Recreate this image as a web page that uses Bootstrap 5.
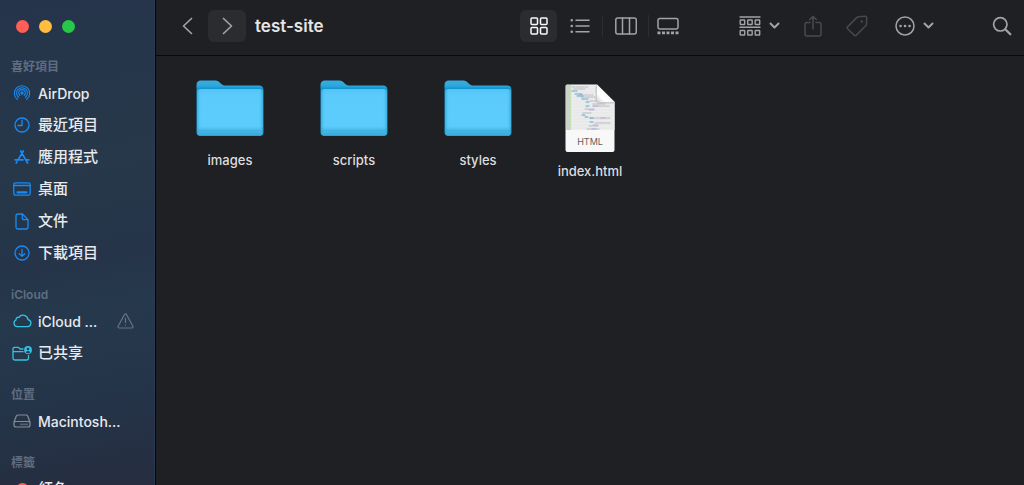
<!DOCTYPE html>
<html lang="zh-Hant">
<head>
<meta charset="utf-8">
<meta name="viewport" content="width=device-width, initial-scale=1">
<title>test-site</title>
<link href="https://cdn.jsdelivr.net/npm/bootstrap@5.3.0/dist/css/bootstrap.min.css" rel="stylesheet">
<style>
  body { background: #1f2023; color: #e3e3e5; font-family: Inter, "Noto Sans CJK TC", sans-serif; }
  svg { fill: none; stroke: currentColor; stroke-linecap: round; stroke-linejoin: round; display: block; flex-shrink: 0; }
  button { background: none; border: 0; padding: 0; color: inherit; }

  .sidebar { width: 156px; border-right: 1px solid #050607; box-shadow: inset -1px 0 #2b3b51; padding-top: 19px;
    background: linear-gradient(170deg, #25344a 0%, #27384a 35%, #253449 54%, #26394c 64%, #243449 80%, #262d40 100%); }
  .lights { height: 14px; gap: 10px; padding-left: 16px; margin-bottom: 24px; }
  .light { width: 13px; height: 13px; border-radius: 50%; }
  .red { background: #ff5f57; } .yellow { background: #ffbc3e; } .green { background: #27c84a; }
  .group { margin-bottom: 16px; }
  .group h2 { font-size: 12px; line-height: 20px; font-weight: 600; color: #5f6d80; margin: 0; padding-left: 11px; }
  .place { height: 32px; padding-left: 11px; color: #e8eaee; font-size: 15px; font-weight: 500; text-decoration: none; white-space: nowrap; }
  .place.latin { font-size: 14px; }
  .place .icon { width: 22px; margin-right: 5px; display: flex; justify-content: center; color: #188bf5; }
  .place .cyan { color: #35c3e3; }
  .place .gray { color: #858c96; }
  .place .warn { color: #667283; margin-left: auto; margin-right: 21px; }

  .toolbar { height: 56px; border-bottom: 1px solid #08090a; padding: 0 12px 4px 12px; color: #a2a3a6; }
  .tool { height: 32px; display: flex; align-items: center; justify-content: center; }
  .nav-tools { gap: 2px; }
  .nav-tool { width: 38px; border-radius: 6px; }
  .raised { background: #2b2c2f; }
  .toolbar h1 { font-size: 17px; font-weight: 600; line-height: 20px; margin: 0 0 0 9px; color: #e5e5e6; }
  .views { margin-right: 53px; }
  .view { width: 37px; border-radius: 6px; }
  .view.wide { width: 45px; }
  .rule { width: 1px; height: 22px; background: #2c2d30; }
  .dim { color: #48494c; }
  .actions { gap: 23px; }
  .find { margin-left: 35px; }

  .files { padding: 24px 12px; }
  .entry { width: 124px; }
  .entry.doc { width: 100px; padding-top: 4px; }
  .entry span { font-size: 13px; line-height: 20px; font-weight: 500; margin-top: 13px; color: #dddddf; }
  .entry.doc span { margin-top: 8px; }
  .entry svg { stroke: none; }
  .entry text { font: 400 9px Inter, sans-serif; fill: #5f5f61; }
</style>
</head>
<body class="d-flex vh-100 overflow-hidden">

<svg width="0" height="0" class="position-absolute" aria-hidden="true">
  <defs>
    <linearGradient id="back" x1="0" y1="0" x2="0" y2="1"><stop offset="0" stop-color="#38aee2"/><stop offset=".1" stop-color="#2ba6dc"/><stop offset=".15" stop-color="#0f94cd"/><stop offset="1" stop-color="#219ccf"/></linearGradient>
    <linearGradient id="front" x1="0" y1="0" x2="0" y2="1"><stop offset="0" stop-color="#52c3f4"/><stop offset=".12" stop-color="#5bcbfc"/><stop offset=".8" stop-color="#5bcdfd"/><stop offset=".87" stop-color="#4cbdec"/><stop offset="1" stop-color="#35a9da"/></linearGradient>
    <linearGradient id="edge"><stop offset="0" stop-color="#2796c7" stop-opacity=".6"/><stop offset=".07" stop-color="#5bccfc" stop-opacity="0"/><stop offset=".93" stop-color="#5bccfc" stop-opacity="0"/><stop offset="1" stop-color="#2796c7" stop-opacity=".6"/></linearGradient>
    <linearGradient id="fold" x1="0" y1="1" x2=".75" y2=".25"><stop offset="0" stop-color="#d2d2d4"/><stop offset=".35" stop-color="#fff"/><stop offset="1" stop-color="#ececee"/></linearGradient>
    <g id="folder">
      <path fill="url(#back)" d="M.5 5Q.5.5 5 .5H19.5C23.500 .5 25 5.500 29 5.500H63Q67.500 5.500 67.500 10V52Q67.500 56 63.500 56H4.500Q.5 56 .5 52Z"/>
      <path fill="url(#front)" d="M1 12.500Q1 9 4.500 9H63.500Q67 9 67 12.500V52Q67 55.500 63.500 55.500H4.500Q1 55.500 1 52Z"/>
      <path fill="url(#edge)" d="M1 12.500Q1 9 4.500 9H63.500Q67 9 67 12.500V52Q67 55.500 63.500 55.500H4.500Q1 55.500 1 52Z"/>
      <path fill="#3badde" d="M2 50h64v.7H2z"/>
    </g>
    <path id="down" d="M1.500 1.500 5.500 5.500 9.500 1.500" stroke-width="2"/>
  </defs>
</svg>

<aside class="sidebar flex-shrink-0 overflow-hidden">
  <div class="lights d-flex align-items-center">
    <button class="light red" aria-label="關閉"></button>
    <button class="light yellow" aria-label="縮到最小"></button>
    <button class="light green" aria-label="縮放"></button>
  </div>

  <nav>
    <section class="group">
      <h2>喜好項目</h2>
      <a href="#" class="place latin d-flex align-items-center"><span class="icon"><svg width="18" height="18" viewBox="0 0 18 18" stroke-width="1.100"><path d="M4.300 15.300A7.600 7.600 0 1 1 13.700 15.300"/><path d="M5.600 13.300A5.400 5.400 0 1 1 12.400 13.300"/><path d="M6.900 11.500A3.300 3.300 0 1 1 11.100 11.500"/><circle cx="9" cy="9" r="1.100" fill="currentColor"/></svg></span>AirDrop</a>
      <a href="#" class="place d-flex align-items-center"><span class="icon"><svg width="16" height="16" viewBox="0 0 16 16" stroke-width="1.300"><circle cx="8" cy="8" r="7"/><path d="M8 3.500V8.500H4"/></svg></span>最近項目</a>
      <a href="#" class="place d-flex align-items-center"><span class="icon"><svg width="16" height="16" viewBox="0 0 16 16" stroke-width="1.700"><path d="M9.300 2 4.300 10.700M3 12.700 2.200 14.100M6.700 2 13.600 14.100M1.200 10.800H9M12.200 10.800H14.800"/></svg></span>應用程式</a>
      <a href="#" class="place d-flex align-items-center"><span class="icon"><svg width="18" height="14" viewBox="0 0 18 14" stroke-width="1.300"><rect x=".8" y=".8" width="16.400" height="12.400" rx="1.800"/><path d="M1 3.500H17"/><path d="M4.500 10.300h9" stroke-width="2.200"/></svg></span>桌面</a>
      <a href="#" class="place d-flex align-items-center"><span class="icon"><svg width="14" height="17" viewBox="0 0 14 17" stroke-width="1.300"><path d="M3 1H7.500L13 6.600V14Q13 16 11 16H3Q1 16 1 14V3Q1 1 3 1ZM7.300 1.300V5Q7.300 6.700 9 6.700H12.700"/></svg></span>文件</a>
      <a href="#" class="place d-flex align-items-center"><span class="icon"><svg width="16" height="16" viewBox="0 0 16 16" stroke-width="1.300"><circle cx="8" cy="8" r="7"/><path d="M8 4.400V11.300M5.300 8.700 8 11.400 10.700 8.700"/></svg></span>下載項目</a>
    </section>

    <section class="group">
      <h2>iCloud</h2>
      <a href="#" class="place latin d-flex align-items-center"><span class="icon cyan"><svg width="19" height="14" viewBox="0 0 19 14" stroke-width="1.300"><path d="M4.500 12.700A3.600 3.600 0 0 1 3 5.900 2.500 2.500 0 0 1 6 3.300 5 5 0 0 1 15 5.600 3.600 3.600 0 0 1 14.700 12.700Z"/></svg></span>iCloud …<svg class="warn" width="17" height="16" viewBox="0 0 17 16" stroke-width="1.200"><path d="M7.600 1.400Q8.500 .3 9.400 1.400L15.900 13.200Q16.300 14.800 14.900 15H2.100Q.7 14.800 1.100 13.200ZM8.500 5.300V9.600M8.500 12.200v.1"/></svg></a>
      <a href="#" class="place d-flex align-items-center"><span class="icon cyan"><svg width="20" height="15" viewBox="0 0 20 15" stroke-width="1.300"><path d="M11 3H8L6.500 1.400H2.500Q1 1.400 1 3V12.300Q1 14 2.700 14H14.800Q16.500 14 16.500 12.300V9.500M1 5.700H11"/><circle cx="16" cy="4" r="3.900" fill="currentColor" stroke="none"/><circle cx="16" cy="3" r="1.300" fill="#24364c" stroke="none"/><path d="M13.700 6.300Q16 3.600 18.300 6.300Q16 8 13.700 6.300Z" fill="#24364c" stroke="none"/></svg></span>已共享</a>
    </section>

    <section class="group">
      <h2>位置</h2>
      <a href="#" class="place latin d-flex align-items-center"><span class="icon gray"><svg width="18" height="14" viewBox="0 0 18 14" stroke-width="1.200"><path d="M4.800 1H13.200Q14.200 1 14.700 2L17 8.300V11Q17 13 15 13H3Q1 13 1 11V8.300L3.300 2Q3.800 1 4.800 1ZM1.200 8.400Q1.700 7.500 3 7.500H15Q16.300 7.500 16.800 8.400"/><path d="M7.500 10.400H14.500" stroke-width="1.800" stroke-dasharray="1 1" stroke-linecap="butt"/></svg></span>Macintosh…</a>
    </section>

    <section class="group">
      <h2>標籤</h2>
      <a href="#" class="place d-flex align-items-center"><span class="icon"><i class="light red"></i></span>紅色</a>
    </section>
  </nav>
</aside>

<main class="flex-grow-1 overflow-hidden">
  <header class="toolbar d-flex align-items-center">
    <div class="nav-tools d-flex">
      <button class="tool nav-tool" aria-label="返回"><svg width="11" height="18" viewBox="0 0 11 18" stroke-width="1.700"><path d="M9.500 1.500 1.500 9l8 7.500"/></svg></button>
      <button class="tool nav-tool raised" aria-label="往前"><svg width="11" height="18" viewBox="0 0 11 18" stroke-width="1.700"><path d="M1.500 1.500 9.500 9l-8 7.500"/></svg></button>
    </div>
    <h1 class="flex-grow-1">test-site</h1>

    <div class="views d-flex align-items-center">
      <button class="tool view raised text-light" aria-label="圖像"><svg width="18" height="18" viewBox="0 0 18 18" stroke-width="1.500"><rect x="1" y="1" width="6.500" height="6.500" rx="1"/><rect x="10.500" y="1" width="6.500" height="6.500" rx="1"/><rect x="1" y="10.500" width="6.500" height="6.500" rx="1"/><rect x="10.500" y="10.500" width="6.500" height="6.500" rx="1"/></svg></button>
      <button class="tool view wide" aria-label="列表"><svg width="20" height="16" viewBox="0 0 20 16" stroke-width="1.500"><path d="M6 2.200H19M6 8H19M6 13.800H19"/><path d="M1.700 2.200h.1M1.700 8h.1M1.700 13.800h.1" stroke-width="2.500"/></svg></button>
      <span class="rule"></span>
      <button class="tool view wide" aria-label="直欄"><svg width="22" height="18" viewBox="0 0 22 18" stroke-width="1.500"><rect x=".8" y="1" width="20.500" height="16" rx="2"/><path d="M7.500 1V17M14.500 1V17"/></svg></button>
      <span class="rule"></span>
      <button class="tool view" aria-label="圖庫"><svg width="22" height="18" viewBox="0 0 22 18" stroke-width="1.500"><rect x="1" y="1.500" width="20" height="10.500" rx="1.700"/><path d="M.5 15.800H21.500" stroke-width="2.800" stroke-dasharray="3 1.500" stroke-linecap="butt"/></svg></button>
    </div>

    <div class="actions d-flex align-items-center">
      <button class="tool" aria-label="群組"><svg width="22" height="20" viewBox="0 0 22 20" stroke-width="1.400"><path d="M1 1H21M1 11.300H21"/><rect x="1.200" y="4" width="4.500" height="4.500" rx=".5"/><rect x="8.700" y="4" width="4.500" height="4.500" rx=".5"/><rect x="16.200" y="4" width="4.500" height="4.500" rx=".5"/><rect x="1.200" y="14.500" width="4.500" height="4.500" rx=".5"/><rect x="8.700" y="14.500" width="4.500" height="4.500" rx=".5"/><rect x="16.200" y="14.500" width="4.500" height="4.500" rx=".5"/></svg><svg class="ms-2" width="11" height="7" viewBox="0 0 11 7"><use href="#down"/></svg></button>
      <button class="tool dim" aria-label="分享"><svg width="20" height="22" viewBox="0 0 20 22" stroke-width="1.500"><path d="M7 7.500H4Q2 7.500 2 9.500V19Q2 21 4 21H16Q18 21 18 19V9.500Q18 7.500 16 7.500H13M10 14V1.300M6.700 4.500 10 1.200 13.300 4.500"/></svg></button>
      <button class="tool dim" aria-label="標籤"><svg width="22" height="22" viewBox="0 0 22 22" stroke-width="1.500"><path d="M13 1.700 18.800 1.300Q20.700 1.200 20.700 3.200L20.500 9Q20.500 10 19.700 10.700L10.500 20.100Q9.300 21.300 8 20L1.800 14Q.6 12.800 1.700 11.600L11 2.400Q11.800 1.700 13 1.700Z"/><circle cx="15.800" cy="6.500" r="1.200" fill="currentColor" stroke="none"/></svg></button>
      <button class="tool ms-1" aria-label="更多"><svg width="20" height="20" viewBox="0 0 20 20" stroke-width="1.500"><circle cx="10" cy="10" r="9"/><path d="M5.500 10h.1M10 10h.1M14.500 10h.1" stroke-width="2.500"/></svg><svg class="ms-2" width="11" height="7" viewBox="0 0 11 7"><use href="#down"/></svg></button>
      <button class="tool find" aria-label="搜尋"><svg width="20" height="20" viewBox="0 0 20 20" stroke-width="1.700"><circle cx="8.300" cy="8.300" r="6.700"/><path d="M13.500 13.500 18.300 18.300" stroke-width="2.300"/></svg></button>
    </div>
  </header>

  <div class="files d-flex flex-wrap align-items-start">
    <button class="entry d-flex flex-column align-items-center"><svg width="68" height="57" viewBox="0 0 68 57"><use href="#folder"/></svg><span>images</span></button>
    <button class="entry d-flex flex-column align-items-center"><svg width="68" height="57" viewBox="0 0 68 57"><use href="#folder"/></svg><span>scripts</span></button>
    <button class="entry d-flex flex-column align-items-center"><svg width="68" height="57" viewBox="0 0 68 57"><use href="#folder"/></svg><span>styles</span></button>
    <button class="entry doc d-flex flex-column align-items-center">
      <svg width="50" height="69" viewBox="0 0 50 69">
        <path fill="#f8f8f8" d="M2 .5H32L49.500 18V66Q49.500 68 47.500 68H2.500Q.5 68 .5 66V2Q.5 .5 2 .5Z"/>
        <path fill="#ededee" d="M1 1H32L49.500 18V46H1z"/>
        <path fill="#d0d0cd" d="M1 1H5V46H1z"/><path fill="#bfe5b5" d="M5 1H6.200V46H5z"/>
        <path stroke="#dfe0e2" stroke-width=".6" d="M7 5H31M7 8H31M7 14H31M7 17H31M7 20H48M7 23H48M7 26H48M7 29H48M7 32H48M7 35H48M7 38H48M7 41H48M7 44H48"/>
        <path stroke="#a9acb0" stroke-width=".8" stroke-dasharray="3 1 5 1 2 1" d="M7 3H23M9 5H20M14 11H28M16 13H30M25 17H31M28 20H40M28 22H45M20 25H30M18 29H26M25 34H45M30 39H45M24 42H34M22 45H35"/>
        <path stroke="#5ba4c8" stroke-width="1" stroke-dasharray="3 1" d="M7 7H12M10 10H17M12 12H18M17 15H23M21 18H25M21 22H25M17 31H21M20 33H24M25 34H28M25 38H29"/>
        <path stroke="#b4a2e2" stroke-width=".8" d="M28 22H33M24 26H29M36 34H40M28 41H33M27 45H31"/>
        <path fill="#8b8b8e" opacity=".35" d="M30.500 2V15.500Q30.500 19.500 34.500 19.500H49V17.500L32 1Z"/>
        <path fill="url(#fold)" d="M32 .5 49.500 18H35Q32 18 32 15Z"/>
        <text x="25" y="61" text-anchor="middle">HTML</text>
      </svg>
      <span>index.html</span>
    </button>
  </div>
</main>

<script src="https://cdn.jsdelivr.net/npm/bootstrap@5.3.0/dist/js/bootstrap.bundle.min.js"></script>
</body>
</html>
